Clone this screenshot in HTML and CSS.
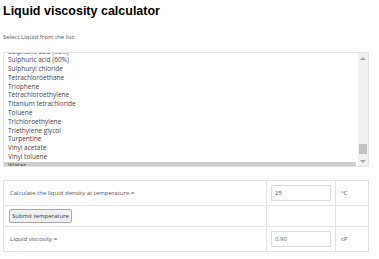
FILE: index.html
```html
<!DOCTYPE html>
<html>
<head>
<title>Liquid viscosity calculator</title>
<link rel="stylesheet" href="styles.css">
</head>
<body>

<h1>Liquid viscosity calculator</h1>

<p class="hint">Select Liquid from the list:</p>

<div class="listbox">
  <div class="options">
    <div class="option">Sulphuric acid (98%)</div>
    <div class="option">Sulphuric acid (60%)</div>
    <div class="option">Sulphuryl chloride</div>
    <div class="option">Tetrachloroethane</div>
    <div class="option">Triophene</div>
    <div class="option">Tetrachloroethylene</div>
    <div class="option">Titanium tetrachloride</div>
    <div class="option">Toluene</div>
    <div class="option">Trichloroethylene</div>
    <div class="option">Triethylene glycol</div>
    <div class="option">Turpentine</div>
    <div class="option">Vinyl acetate</div>
    <div class="option">Vinyl toluene</div>
    <div class="option selected">Water</div>
  </div>
  <div class="scrollbar">
    <div class="arrow"><span class="up"></span></div>
    <div class="track"><div class="thumb"></div></div>
    <div class="arrow"><span class="down"></span></div>
  </div>
</div>

<table class="calc">
  <tr class="tall">
    <td class="label">Calculate the liquid density at temperature =</td>
    <td class="value"><input type="text" value="25"></td>
    <td class="unit">&deg;C</td>
  </tr>
  <tr class="short">
    <td class="label"><button>Submit temperature</button></td>
    <td></td>
    <td></td>
  </tr>
  <tr class="tall">
    <td class="label">Liquid viscosity =</td>
    <td class="value"><input type="text" value="0.90" readonly></td>
    <td class="unit">cP</td>
  </tr>
</table>

</body>
</html>
```

FILE: styles.css
```css
body {
  margin: 0;
  padding: 4px 10px 0 3px;
  width: 366px;
  font-family: "Open Sans", sans-serif;
  color: #555;
}
h1 {
  margin: 0;
  font-family: "Liberation Sans", Arial, sans-serif;
  font-size: 12.5px;
  line-height: 14px;
  font-weight: bold;
  color: #000;
}
.hint {
  margin: 15px 0 0;
  font-size: 6px;
  line-height: 8px;
}
.listbox {
  display: flex;
  margin-top: 11px;
  height: 113px;
  border: 1px solid #e4e4e4;
  overflow: hidden;
}
.options {
  flex: 1;
  margin-top: -5.5px;
}
.option {
  padding-left: 4px;
  font-size: 6.5px;
  line-height: 8.8px;
  color: #444;
}
.option.selected {
  background: #cecece;
  margin-right: 2px;
}
.scrollbar {
  display: flex;
  flex-direction: column;
  width: 10px;
  background: #f1f1f1;
}
.arrow {
  height: 10px;
  display: flex;
  align-items: center;
  justify-content: center;
}
.up {
  border-left: 3px solid transparent;
  border-right: 3px solid transparent;
  border-bottom: 3px solid #a3a3a3;
}
.down {
  border-left: 3px solid transparent;
  border-right: 3px solid transparent;
  border-top: 3px solid #a3a3a3;
}
.track {
  flex: 1;
  display: flex;
  flex-direction: column;
  justify-content: flex-end;
  padding-bottom: 2px;
}
.thumb {
  height: 10px;
  margin: 0 1px;
  background: #c1c1c1;
}
.calc {
  margin-top: 13px;
  width: 366px;
  border-collapse: collapse;
  font-size: 6px;
}
.calc td {
  border: 1px solid #e2e2e2;
  padding: 0 0 0 6px;
}
.calc tr.tall {
  height: 25px;
}
.calc tr.short {
  height: 21px;
}
.calc td.label {
  width: 256px;
}
.calc td.value {
  width: 64px;
  padding-left: 4px;
}
.calc td.unit {
  padding-left: 5px;
}
.calc input {
  box-sizing: border-box;
  width: 60px;
  height: 16px;
  padding: 0 3px;
  border: 1px solid #dcdcdc;
  font-family: "Open Sans", sans-serif;
  font-size: 6px;
  color: #555;
}
.calc button {
  font-family: "Open Sans", sans-serif;
  font-size: 6px;
  color: #333;
  padding: 2px 2px;
  background: #efefef;
  border: 1px solid #a9a9a9;
  border-radius: 2px;
  margin-left: -1px;
}
```
